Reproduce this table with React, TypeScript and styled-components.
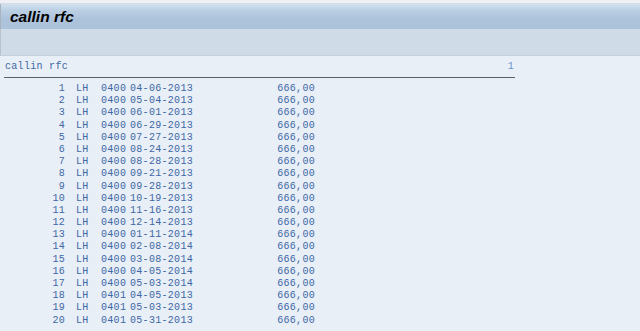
import { FC } from 'react';
import styled, { createGlobalStyle } from 'styled-components';

type IRow = {
    no: number;
    airline: string;
    conn: string;
    date: string;
    price: string;
}

const dates = [
    ['0400', '04-06-2013'], ['0400', '05-04-2013'], ['0400', '06-01-2013'], ['0400', '06-29-2013'],
    ['0400', '07-27-2013'], ['0400', '08-24-2013'], ['0400', '08-28-2013'], ['0400', '09-21-2013'],
    ['0400', '09-28-2013'], ['0400', '10-19-2013'], ['0400', '11-16-2013'], ['0400', '12-14-2013'],
    ['0400', '01-11-2014'], ['0400', '02-08-2014'], ['0400', '03-08-2014'], ['0400', '04-05-2014'],
    ['0400', '05-03-2014'], ['0401', '04-05-2013'], ['0401', '05-03-2013'], ['0401', '05-31-2013'],
];

const rows: IRow[] = dates.map(([conn, date], i) => ({
    no: i + 1,
    airline: 'LH',
    conn,
    date,
    price: '666,00',
}));

const GlobalStyle = createGlobalStyle`
    html, body {
        margin: 0;
        padding: 0;
        background: #e9eff6;
        overflow: hidden;
    }
`;

export const Window = styled.div`
    display: flex;
    flex-direction: column;
    width: 640px;
    height: 331px;
    background: #e9eff6;
`;

export const TopStrip = styled.div`
    height: 3px;
    background: #eef0f5;
    border-bottom: 1px solid #d6dce4;
`;

export const TitleBar = styled.header`
    display: flex;
    align-items: center;
    height: 25px;
    padding-left: 9px;
    border-left: 1px solid #a9b3bd;
    background: linear-gradient(to bottom, #d3e1ef 0%, #bcd0e4 25%, #adc3db 60%, #adc3da 100%);
    font-family: "Liberation Sans", Arial, sans-serif;
    font-size: 15.5px;
    font-weight: bold;
    font-style: italic;
    color: #000;
`;

export const Toolbar = styled.div`
    height: 26px;
    border-left: 1px solid #b9c3cc;
    border-bottom: 1px solid #c4d1dc;
    background: #cfdce7;
`;

export const ListArea = styled.main`
    flex: 1;
    padding: 5px 0 0 4px;
    font-family: "Liberation Mono", "Courier New", monospace;
    font-size: 10px;
    letter-spacing: 0.3px;
    color: #3d68a5;
`;

export const ListHeader = styled.div`
    display: flex;
    justify-content: space-between;
    align-items: center;
    box-sizing: border-box;
    width: 511px;
    height: 17px;
    padding: 0 1px 4px 1px;
    border-bottom: 1px solid #5c6166;
    line-height: 12px;
`;

export const PageNo = styled.span`
    color: #6b93c9;
`;

export const Rows = styled.div`
    margin-top: 5px;
`;

export const Row = styled.div`
    display: grid;
    grid-template-columns: 61px 36px 29px 68px 117px;
    height: 12.2px;
    line-height: 12.2px;
    white-space: pre;
`;

export const Cell = styled.span<{ $right?: boolean; $pad?: number }>`
    text-align: ${p => (p.$right ? 'right' : 'left')};
    padding-left: ${p => p.$pad ?? 0}px;
`;

const App: FC = () => {

    return <>
        <GlobalStyle />
        <Window>
            <TopStrip />
            <TitleBar>callin rfc</TitleBar>
            <Toolbar />
            <ListArea>
                <ListHeader>
                    <span>callin rfc</span>
                    <PageNo>1</PageNo>
                </ListHeader>
                <Rows>
                    {
                        rows.map(row =>
                            <Row key={row.no}>
                                <Cell $right>{row.no}</Cell>
                                <Cell $pad={11}>{row.airline}</Cell>
                                <Cell>{row.conn}</Cell>
                                <Cell>{row.date}</Cell>
                                <Cell $right>{row.price}</Cell>
                            </Row>
                        )
                    }
                </Rows>
            </ListArea>
        </Window>
    </>

};

export default App;
